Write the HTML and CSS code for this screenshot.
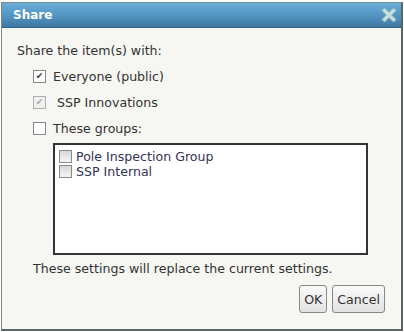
FILE: index.html
```html
<!DOCTYPE html>
<html lang="en">
<head>
<meta charset="UTF-8">
<title>Share</title>
<link rel="stylesheet" href="styles.css">
</head>
<body>
<div class="dialog">
    <div class="titlebar">
        <span class="title">Share</span>
        <span class="close">
            <svg width="16" height="16" viewBox="0 0 16 16">
                <path d="M3.5 1 L8 5.5 L12.5 1 L15 3.5 L10.5 8 L15 12.5 L12.5 15 L8 10.5 L3.5 15 L1 12.5 L5.5 8 L1 3.5 Z" fill="#c9e0de" stroke="#96bcc2" stroke-width="1"/>
            </svg>
        </span>
    </div>
    <div class="content">
        <p class="intro">Share the item(s) with:</p>
        <label class="option"><span class="box checked">&#10004;</span>Everyone (public)</label>
        <label class="option disabled"><span class="box checked">&#10004;</span>&nbsp;SSP Innovations</label>
        <label class="option"><span class="box"></span>These groups:</label>
        <div class="group-list">
            <label class="group"><span class="small-box"></span>Pole Inspection Group</label>
            <label class="group"><span class="small-box"></span>SSP Internal</label>
        </div>
        <p class="note">These settings will replace the current settings.</p>
        <div class="actions">
            <button class="btn">OK</button>
            <button class="btn">Cancel</button>
        </div>
    </div>
</div>
</body>
</html>
```

FILE: styles.css
```css
body {
    margin: 0;
    background: #ffffff;
    font-family: "DejaVu Sans", Verdana, sans-serif;
    font-size: 12.6px;
    color: #333333;
}

.dialog {
    margin: 2px 2px 0 1px;
    width: 399px;
    height: 326px;
    border: 1px solid #7a8a8c;
    border-right: 2px solid #5c6566;
    border-bottom: 2px solid #5c6566;
    background: #f6f6f2;
    display: flex;
    flex-direction: column;
}

.titlebar {
    height: 24px;
    background: linear-gradient(#6aaed8, #4f90bd 60%, #3e77a2);
    border-bottom: 1px solid #2f5f83;
    display: flex;
    align-items: center;
    justify-content: space-between;
    padding: 0 4px 0 11px;
}

.title {
    color: #ffffff;
    font-weight: bold;
    font-size: 12px;
}

.close {
    display: flex;
}

.content {
    padding: 0 0 0 15px;
    display: flex;
    flex-direction: column;
}

.intro {
    margin: 15px 0 5px 0;
    line-height: 15px;
}

.option {
    display: flex;
    align-items: center;
    height: 26px;
    padding-left: 16px;
}

.box {
    width: 11px;
    height: 11px;
    border: 1px solid #888888;
    background: #ffffff;
    margin-right: 7px;
    font-size: 9px;
    line-height: 11px;
    text-align: center;
    color: #333333;
}

.disabled .box {
    border-color: #b0b0b0;
    color: #a8a8a8;
    background: #f0f0f0;
}

.group-list {
    margin: 2px 0 0 36px;
    width: 315px;
    height: 112px;
    border: 2px solid #333333;
    background: #ffffff;
    padding: 4px 0 0 4px;
    box-sizing: border-box;
}

.group {
    display: flex;
    align-items: center;
    height: 15px;
    color: #333355;
}

.small-box {
    width: 11px;
    height: 11px;
    border: 1px solid #8a8a8a;
    background: linear-gradient(#d8d8d8, #f4f4f4);
    margin-right: 4px;
}

.note {
    margin: 6px 0 0 16px;
    line-height: 15px;
}

.actions {
    display: flex;
    justify-content: flex-end;
    gap: 5px;
    margin: 9px 16px 0 0;
}

.btn {
    font-family: "DejaVu Sans", Verdana, sans-serif;
    font-size: 12.6px;
    color: #333333;
    height: 28px;
    padding: 0 4px;
    border: 1px solid #888888;
    border-radius: 3px;
    background: linear-gradient(#fafafa, #e2e2e2);
}
```
